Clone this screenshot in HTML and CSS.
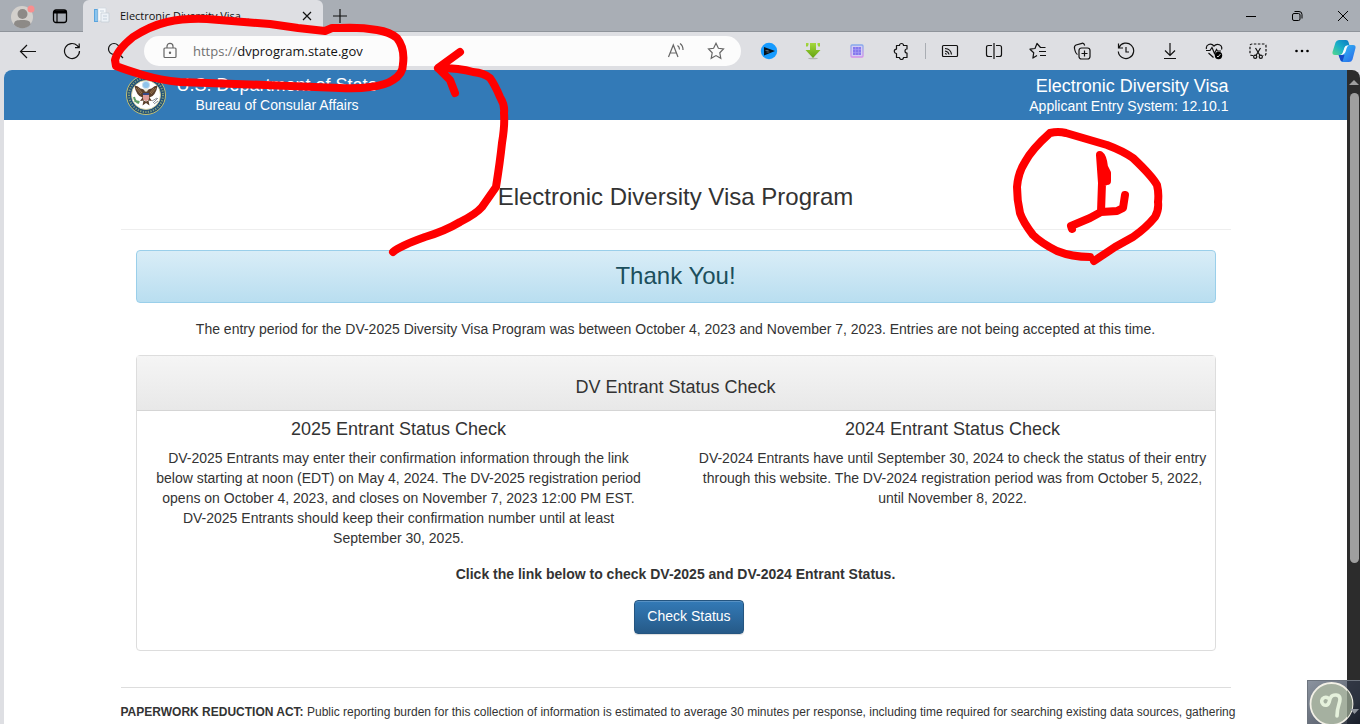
FILE: index.html
```html
<!DOCTYPE html>
<html lang="en">
<head>
<meta charset="utf-8">
<title>Electronic Diversity Visa Program</title>
<link rel="stylesheet" href="styles.css">
</head>
<body>
<div class="tabstrip">
  <button class="avatar" aria-label="Profile">
    <svg width="26" height="26" viewBox="0 0 26 26"><circle cx="12" cy="14" r="11" fill="#d3d0cc"/><circle cx="12.500" cy="11" r="5" fill="#8d8a87"/><path d="M4 21.500c0-4 3-4.500 8.500-4.500s8 1 8 4.500a11 11 0 0 1-16.500 0z" fill="#8d8a87"/><circle cx="21" cy="6" r="3.500" fill="#f98e8e"/></svg>
  </button>
  <button class="workspaces" aria-label="Tab actions">
    <svg width="16" height="16" viewBox="0 0 16 16" fill="none" stroke="#000"><rect x="1.500" y="2" width="13" height="12.500" rx="2.500" stroke-width="1.300"/><path d="M2 4h12" stroke-width="3"/><path d="M5 5v9" stroke-width="1.200"/></svg>
  </button>
  <div class="tab">
    <svg width="18" height="18" viewBox="0 0 18 18"><path d="M1 2h4v13H1z" fill="#5aa5de"/><path d="M2 3h2v11H2z" fill="#8cc5ee"/><path d="M5 1h8v13H5z" fill="#f5f8fb" stroke="#d0d7de" stroke-width=".7"/><path d="M8 6h8v9H8z" fill="#edf2f7" stroke="#c2cbd3" stroke-width=".7"/><path d="M7 4h4M10 9h4M10 12h4" stroke="#c3d0dc"/></svg>
    <span class="tab-title">Electronic Diversity Visa...</span>
    <button class="tab-close" aria-label="Close tab"><svg width="10" height="10" viewBox="0 0 10 10" stroke="#111" stroke-width="1.200"><path d="M1 1l8 8M9 1l-8 8"/></svg></button>
  </div>
  <button class="new-tab" aria-label="New tab"><svg width="14" height="14" viewBox="0 0 14 14" stroke="#111" stroke-width="1.200"><path d="M7 0v14M0 7h14"/></svg></button>
  <div class="window-controls">
    <button aria-label="Minimize"><svg width="10" height="10" viewBox="0 0 10 10" stroke="#000"><path d="M0 5.500h10"/></svg></button>
    <button aria-label="Restore"><svg width="12" height="12" viewBox="0 0 12 12" fill="none" stroke="#000"><rect x="1.500" y="3.500" width="7.500" height="7" rx="1.500"/><path d="M3.500 1.500h4.500q3 0 3 3v4"/></svg></button>
    <button aria-label="Close"><svg width="12" height="12" viewBox="0 0 12 12" stroke="#000"><path d="M1 1l10 10M11 1L1 11"/></svg></button>
  </div>
</div>

<div class="toolbar">
  <div class="tools">
    <button aria-label="Back"><svg class="icon" viewBox="0 0 18 18"><path d="M17 9.500H2M8 3L1.500 9.500 8 16"/></svg></button>
    <button aria-label="Refresh"><svg class="icon" viewBox="0 0 18 18"><path d="M16.500 9a7.500 7.500 0 1 1-2.200-5.300L16 5.500M16.200 1.500v4.200H12"/></svg></button>
    <button aria-label="Search"><svg class="icon" viewBox="0 0 18 18"><circle cx="7" cy="7" r="5.500"/><path d="M11 11l5 5"/></svg></button>
  </div>
  <div class="address">
    <svg class="icon muted" viewBox="0 0 18 18"><rect x="3" y="6" width="12" height="9.500" rx="1"/><path d="M6 6V4.300a3 3 0 0 1 6 0V6"/><circle cx="9" cy="10.800" r=".6" fill="#555"/></svg>
    <div class="url"><span class="scheme">https://</span>dvprogram.state.gov</div>
    <button aria-label="Read aloud"><svg class="icon muted" viewBox="0 0 18 18"><path d="M1.500 15L6.300 3 11 15M3.200 11h6.200M10.500 3.500q2 1.300 2 4M13 1.500q3.200 2.300 3 6.500"/></svg></button>
    <button aria-label="Add to favorites"><svg class="icon muted" viewBox="0 0 18 18"><path d="M9 1.300l2.400 5 5.100.7-3.700 3.800 1 5.500L9 13.600l-4.800 2.700 1-5.500L1.500 7l5.100-.7z"/></svg></button>
  </div>
  <div class="tools">
    <button aria-label="Media extension"><svg class="icon" viewBox="0 0 18 18"><circle cx="9" cy="9" r="8.200" fill="#169bff" stroke="none"/><path d="M4 5l11 4-11 4.500z" fill="#06121c" stroke="none"/><path d="M5.500 8.500h3M6.500 10h3" stroke="#55636e"/></svg></button>
    <button aria-label="Download extension"><svg class="icon" viewBox="0 0 18 18"><defs><linearGradient id="green" x2="0" y2="1"><stop stop-color="#a5d83e"/><stop offset="1" stop-color="#64a30f"/></linearGradient></defs><ellipse cx="9" cy="16.500" rx="5" ry=".8" fill="#b3b5b1" stroke="none"/><path d="M6 1h6v7h4.500L9 16 1.500 8H6zM2 1h2.500v2L3 5 2 4zM16 1h-2.500v2L15 5l1-1z" fill="url(#green)" stroke="none"/></svg></button>
    <button aria-label="Capture extension"><svg class="icon" viewBox="0 0 18 18"><defs><linearGradient id="violet" x2="0" y2="1"><stop stop-color="#86a9ec"/><stop offset="1" stop-color="#d591e8"/></linearGradient></defs><rect x="3" y="3" width="12" height="12" rx="1" fill="#d3cdf3" stroke="url(#violet)" stroke-width="1.300"/><path d="M5 5h8v8H5z" fill="#8579ee" stroke="none"/><path d="M7.500 5v8M10.500 5v8M5 7.500h8M5 10.500h8" stroke="#a99df4" stroke-width=".6"/></svg></button>
    <button aria-label="Extensions"><svg class="icon" viewBox="0 0 18 18"><path d="M4.500 3.500h3a2 2 0 0 1 4 0h3.500v3.500a2 2 0 0 0 0 4v4.500h-3.500a2 2 0 0 1-4 0h-3V11.500a2.200 2.200 0 1 1 0-4.400z" stroke-linejoin="round"/></svg></button>
  </div>
  <span class="divider"></span>
  <div class="tools">
    <button aria-label="Cast"><svg class="icon" viewBox="0 0 18 18"><rect x="1.500" y="3.500" width="15" height="11" rx="1"/><path d="M4 6.500q6 .5 6.500 6M4 9q3.500.5 4 3.500M4 11.500q1.500 0 1.500 1"/></svg></button>
    <button aria-label="Split screen"><svg class="icon" viewBox="0 0 18 18"><path d="M7 3.500H3.500q-2 0-2 2v7q0 2 2 2H7M11 3.500h3.500q2 0 2 2v7q0 2-2 2H11M9 1v16"/></svg></button>
    <button aria-label="Favorites"><svg class="icon" viewBox="0 0 18 18"><path d="M16.500 5.500h-5L8 1.500l-2 5-5 .7 3.700 3.600-.8 5.300L8 13.500M10 9.500h7M11 13.500h6" stroke-linejoin="round"/></svg></button>
    <button aria-label="Collections"><svg class="icon" viewBox="0 0 18 18"><rect x="6" y="6" width="11" height="11" rx="2.500"/><path d="M11.500 8.500v6M8.500 11.500h6M4.500 12.500Q2.500 11.500 1.500 6.500 1 4 3 3l6-1.700q2-.5 2.700 2.200"/></svg></button>
    <button aria-label="History"><svg class="icon" viewBox="0 0 18 18"><path d="M2 5.500a7.700 7.700 0 1 1-.7 4M1.500 1.500V6H6M9 5v5h3"/></svg></button>
    <button aria-label="Downloads"><svg class="icon" viewBox="0 0 18 18"><path d="M9 1v12.500M4 8.500l5 5 5-5M3 16.500h12"/></svg></button>
    <button aria-label="Browser essentials"><svg class="icon" viewBox="0 0 18 18"><path d="M1.500 7C.500 2.500 6 .500 9 4c3-3.500 9-1 7.500 3.500M1 8.500h4l2-3 2.500 6 2-4 1 1.500H16M3.500 11l5 4.500"/><circle cx="13.500" cy="13.500" r="3.700" fill="#000" stroke="none"/><path d="M12 14l1 1 2.500-3" stroke="#fff" stroke-width=".8"/></svg></button>
    <button aria-label="Screenshot"><svg class="icon" viewBox="0 0 18 18"><path d="M4 13.500H3q-2 0-2-2V4q0-2 2-2h12q2 0 2 2v7.500q0 2-2 2h-1" stroke-dasharray="2.500 1.500"/><path d="M6.500 6l4.500 7.500M11.500 6L7 13.500"/><circle cx="6.200" cy="14.700" r="1.600"/><circle cx="11.800" cy="14.700" r="1.600"/></svg></button>
    <button aria-label="Settings and more"><svg class="icon" viewBox="0 0 18 18"><g fill="#000" stroke="none"><circle cx="3.500" cy="9" r="1.300"/><circle cx="9" cy="9" r="1.300"/><circle cx="14.500" cy="9" r="1.300"/></g></svg></button>
    <button class="copilot" aria-label="Copilot"><svg width="24" height="24" viewBox="0 0 24 24"><defs><linearGradient id="teal" x1="1" x2="0" y2="1"><stop stop-color="#0a78c4"/><stop offset=".5" stop-color="#19aec8"/><stop offset="1" stop-color="#55d98b"/></linearGradient><linearGradient id="blue" x2="1" y2="1"><stop stop-color="#35c4f4"/><stop offset="1" stop-color="#2765ea"/></linearGradient></defs><path d="M7 1h7q2 0 2.500 2l.8 3-4 1-2.500 7q-.7 2-2.700 2H3q-3 0-2.500-3l3-9.500Q4.500 1 7 1z" fill="url(#teal)"/><path d="M17 23h-6q-2 0-2.700-2L7 16h2q2 0 2.700-2l2.800-7q.5-1 2-1H21q3 0 2.500 3l-3 11.500Q19.500 23 17 23z" fill="url(#blue)"/><path d="M6.500 16h6l-2 6.500Q8.500 22 8 20z" fill="#1549c7"/><path d="M12.500 8.500q.8-2 4.500-2.500-2 1-3.200 6-1 4-5.800 4 2.500-.500 3-3z" fill="#f4fbff"/></svg></button>
  </div>
</div>

<div class="viewport">
  <div class="page">
    <header class="site-header">
      <div class="container header-inner">
        <div class="brand">
          <svg class="seal" width="40" height="40" viewBox="0 0 40 40">
            <circle cx="20" cy="20" r="19.500" fill="#1f4f78" stroke="#c5c172"/>
            <circle cx="20" cy="20" r="17" fill="none" stroke="#7f9c7c" stroke-width="2" stroke-dasharray="1.300 1.300"/>
            <circle cx="20" cy="20" r="14.500" fill="#fff" stroke="#d4cf93" stroke-width=".8"/>
            <circle cx="20" cy="10" r="3.600" fill="#8fc3ea" stroke="#c8dced"/>
            <path d="M18.500 15q-2-1.500-4-1.500-3-3-6-3 .5 5 3 8.500 2 3 5 3.500l-2.500 3.500 3.500-.5-1 5 3.500-2.500 3.500 2.500-1-5 3.500.5-2.500-3.500q3-.5 5-3.500 2.500-3.500 3-8.500-3 0-6 3-2 0-4 1.500z" fill="#5c402c"/>
            <path d="M10 13l5 6M12 13l4 5M30 13l-5 6M28 13l-4 5" stroke="#b08a5b" stroke-width=".7"/>
            <circle cx="20" cy="15" r="1.800" fill="#eee8d7"/>
            <path d="M17 18h6v5q0 2.500-3 3.500-3-1-3-3.500z" fill="#f5eee8"/>
            <path d="M17 18h6v2h-6z" fill="#364a88"/>
            <path d="M18 20v5M20 20v6M22 20v5" stroke="#c94747"/>
            <path d="M8 22q1 5 5 6M8.500 26l5 1" stroke="#5e9c64" stroke-width="2" fill="none"/>
            <path d="M27 28l5-5M26 26l5-3M28 29l4-3" stroke="#8c9299"/>
          </svg>
          <div class="brand-text">
            <div class="lead">U.S. Department of State</div>
            <div>Bureau of Consular Affairs</div>
          </div>
        </div>
        <div class="system">
          <div class="lead">Electronic Diversity Visa</div>
          <div>Applicant Entry System: 12.10.1</div>
        </div>
      </div>
    </header>
    <main class="container">
      <h1>Electronic Diversity Visa Program</h1>
      <div class="content">
        <div class="alert">Thank You!</div>
        <p class="notice">The entry period for the DV-2025 Diversity Visa Program was between October 4, 2023 and November 7, 2023. Entries are not being accepted at this time.</p>
        <section class="panel">
          <h2>DV Entrant Status Check</h2>
          <div class="columns">
            <div class="column">
              <h3>2025 Entrant Status Check</h3>
              <p class="narrow">DV-2025 Entrants may enter their confirmation information through the link below starting at noon (EDT) on May 4, 2024. The DV-2025 registration period opens on October 4, 2023, and closes on November 7, 2023 12:00 PM EST. DV-2025 Entrants should keep their confirmation number until at least September 30, 2025.</p>
            </div>
            <div class="column">
              <h3>2024 Entrant Status Check</h3>
              <p>DV-2024 Entrants have until September 30, 2024 to check the status of their entry through this website. The DV-2024 registration period was from October 5, 2022, until November 8, 2022.</p>
            </div>
          </div>
          <p class="prompt">Click the link below to check DV-2025 and DV-2024 Entrant Status.</p>
          <div class="actions"><button class="check">Check Status</button></div>
        </section>
      </div>
      <footer><strong>PAPERWORK REDUCTION ACT:</strong> Public reporting burden for this collection of information is estimated to average 30 minutes per response, including time required for searching existing data sources, gathering</footer>
    </main>
  </div>
  <div class="scrollbar"><span class="arrow"></span><span class="thumb"></span></div>
</div>

<svg class="ink" width="1360" height="724" viewBox="0 0 1360 724">
  <path d="M350 28L332 28L325 31L298 28L270 24L207 19Q185 18 167 22Q150 26 133 37Q117 50 115 60L116 66Q126 70 143 75Q160 80 180 82L265 85L340 88Q358 89 370 87Q386 85 393 80Q403 74 403 64Q405 48 397 38Q390 32 377 30Q360 27 340 28"/>
  <path d="M393 252Q400 246 425 237Q445 231 460 222Q476 214 482 207L496 187Q500 162 502 143Q505 125 504 113Q505 105 500 97Q495 85 490 78Q484 73 473 72Q460 68 438 68L460 52M438 68L450 80L455 93"/>
  <path d="M1090 257Q1072 257 1057 251Q1041 243 1033 235Q1023 222 1020 213Q1017 200 1017 187Q1018 173 1025 162Q1032 149 1050 133Q1058 131 1066 133L1107 145Q1123 151 1133 158Q1152 176 1157 185Q1159 193 1158 202Q1159 210 1155 217Q1146 228 1133 237L1115 247L1094 261"/>
  <path d="M1072 229L1071 226L1090 218L1101 212L1117 211L1123 208L1125 195M1101 212L1102 183L1100 155Q1103 157 1104 167L1107 173V181M1103 165L1104 182"/>
</svg>
<svg class="stamp" width="53" height="44" viewBox="0 0 53 44">
  <defs><linearGradient id="slate" x2="1" y2="1"><stop stop-color="#8d95a1"/><stop offset=".7" stop-color="#5c6370"/><stop offset="1" stop-color="#1f242c"/></linearGradient></defs>
  <path d="M0 0h53v44H0z" fill="url(#slate)"/><path d="M40 0h13v44H40z" fill="#171d29" opacity=".7"/><path d="M0 0h53v1H1v43H0z" fill="#6d747e"/>
  <circle cx="24.500" cy="24" r="21" fill="#a5b0a0" stroke="#f2f0e6" stroke-width="1.800"/>
  <path d="M40 10a21 21 0 0 1 0 28z" fill="#7c8779"/>
  <path d="M21 18a4 4 0 1 0-1 7c3-1 2-6 4-8 2-3 9-3 9 2 0 5-3 7-3 17" fill="none" stroke="#e5f1dc" stroke-width="3.600" stroke-linecap="round"/>
  <path d="M43 29h9l-4.500 5z" fill="#8e939b"/>
</svg>
</body>
</html>
```

FILE: styles.css
```css
* { box-sizing: border-box; }
body {
  margin: 0;
  height: 100vh;
  position: relative;
  overflow: hidden;
  display: flex;
  flex-direction: column;
  background: #dedfe3;
  color: #333;
  font: 14px/20px "Liberation Sans", Arial, sans-serif;
}
button { border: 0; padding: 0; background: none; font: inherit; color: inherit; }
svg { display: block; flex: none; }
h1, h2, h3, p { margin: 0; font-weight: 400; }

/* Browser frame */
.tabstrip {
  flex: none;
  display: flex;
  height: 32px;
  background: #a9aeb5;
  border-bottom: 1px solid #8f949b;
}
.tabstrip button { display: grid; place-items: center; }
.avatar { width: 46px; }
.workspaces { width: 28px; }
.tab {
  display: flex;
  align-items: center;
  width: 240px;
  height: 32px;
  margin-left: 9px;
  padding: 0 10px;
  gap: 9px;
  border-radius: 6px 6px 0 0;
  background: #dedfe3;
}
.tab-title { flex: 1; font: 11px/16px "Open Sans", "Noto Sans", sans-serif; color: #111; white-space: nowrap; }
.tab-close { width: 12px; height: 24px; }
.new-tab { width: 34px; }
.window-controls { display: flex; margin-left: auto; }
.window-controls button { width: 46px; }
.window-controls button:last-child { margin-right: -6px; }

.toolbar {
  flex: none;
  display: flex;
  align-items: center;
  height: 38px;
  padding-left: 6px;
}
.tools { display: flex; }
.tools button { width: 44px; height: 32px; display: grid; place-items: center; }
.tools .copilot { width: 36px; justify-content: end; padding-right: 4px; }
.icon { width: 18px; height: 18px; fill: none; stroke: #111; stroke-width: 1.2px; }
.muted { stroke: #666; }
.address {
  flex: 1;
  display: flex;
  align-items: center;
  height: 30px;
  margin: 0 6px;
  padding: 0 5px 0 17px;
  border-radius: 15px;
  background: #fcfcfc;
}
.address button { width: 40px; display: grid; place-items: center; }
.url { flex: 1; margin-left: 14px; font: 13px/20px "Open Sans", "Noto Sans", sans-serif; color: #111; }
.scheme { color: #707070; }
.divider { width: 1px; height: 16px; margin: 0 2px; background: #a9adb3; }

/* Document area */
.viewport {
  flex: 1;
  min-height: 0;
  display: flex;
  margin-left: 4px;
  border-radius: 8px 8px 0 0;
  overflow: hidden;
}
.page { flex: 1; background: #fff; overflow: hidden; }
.scrollbar {
  width: 13px;
  display: flex;
  flex-direction: column;
  align-items: center;
  padding: 10px 0 0 1px;
  background: #2c2c2c;
}
.arrow { border: 5px solid transparent; border-top: 0; border-bottom: 5px solid #9f9f9f; }
.thumb { width: 9px; height: 73%; margin-top: 8px; border-radius: 5px; background: #9f9f9f; }
.container { max-width: 1140px; margin: 0 auto; padding: 0 15px; }

.site-header { background: #337ab7; color: #fff; }
.header-inner { display: flex; justify-content: space-between; height: 50px; }
.brand { display: flex; padding-left: 5px; gap: 11px; }
.seal { margin-top: 5px; }
.brand-text { padding-top: 5px; text-align: center; }
.system { padding: 6px 2px 0 0; text-align: right; }
.lead { font-size: 18px; }

h1 {
  padding: 60px 0 16px;
  border-bottom: 1px solid #eee;
  font-size: 24px;
  line-height: 33px;
  text-align: center;
}
.content { padding: 20px 15px 0; text-align: center; }
.alert {
  padding: 12px 13px 14px;
  border: 1px solid #9acfea;
  border-radius: 4px;
  background: linear-gradient(#d9edf7, #b9def0);
  color: #1b4f5c;
  font-size: 24px;
  line-height: 25px;
}
.notice { margin: 16px 0; }
.panel { border: 1px solid #ddd; border-radius: 4px; padding-bottom: 16px; }
h2 {
  padding: 21px 15px 13px;
  border-bottom: 1px solid #d5d5d5;
  background: linear-gradient(#f5f5f5, #e8e8e8);
  font-size: 18px;
  line-height: 20px;
}
.columns { display: flex; margin: 0 -15px; }
.column { flex: 1; padding: 8px 15px 0; }
h3 { margin-bottom: 9px; font-size: 18px; line-height: 20px; }
.narrow { padding: 0 17px; }
.prompt { margin: 16px 0; font-weight: 700; }
.actions { padding-left: 27px; }
.check {
  height: 34px;
  padding: 0 12px 2px;
  border: 1px solid #245580;
  border-radius: 4px;
  background: linear-gradient(#337ab7, #265a88);
  box-shadow: inset 0 1px 0 #5791c4, 0 1px 1px #ddd;
  color: #fff;
}
footer { margin-top: 36px; padding-top: 14px; border-top: 1px solid #ddd; font-size: 12px; white-space: nowrap; }

/* Drawn marks over the window */
.ink { position: absolute; top: 0; left: 0; pointer-events: none; fill: none; stroke: #f00; stroke-width: 8px; stroke-linecap: round; stroke-linejoin: round; }
.stamp { position: absolute; right: 0; bottom: 0; }
```
